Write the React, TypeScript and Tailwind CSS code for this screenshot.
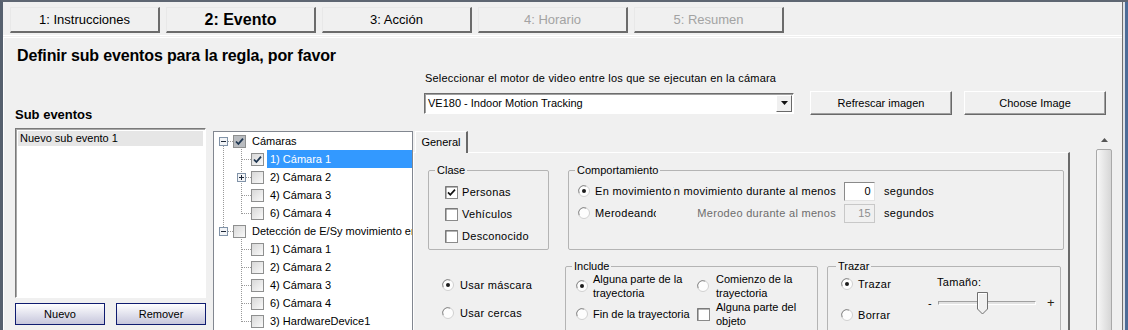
import React from "react";

function NavButton({ label, active, disabled }: { label: string; active?: boolean; disabled?: boolean }) {
  return (
    <div
      className={`flex h-[26px] w-[150px] items-center justify-center border-t border-l border-r-2 border-b-2 border-t-[#e8e8e8] border-l-[#e8e8e8] border-r-[#6b6b6b] border-b-[#6b6b6b] bg-[#f0f0f0] ${
        active ? "text-[16px] font-bold text-black" : disabled ? "text-[13px] text-[#a3a3a3]" : "text-[13px] text-black"
      }`}
    >
      {label}
    </div>
  );
}

function Radio({ on }: { on?: boolean }) {
  return (
    <svg width="12" height="12" viewBox="0 0 12 12" className="shrink-0">
      <circle cx="6" cy="6" r="5.5" fill="#fdfdfd" stroke="#d0d0d0" />
      <path d="M1.2 8.2 A5.2 5.2 0 0 1 8.2 1.2" stroke="#8c8c8c" fill="none" />
      {on && <circle cx="6" cy="6" r="2" fill="#1c1c1c" />}
    </svg>
  );
}

function Check({ on }: { on?: boolean }) {
  return (
    <svg width="13" height="13" viewBox="0 0 13 13" className="shrink-0">
      <rect x="0.5" y="0.5" width="12" height="12" fill="#fff" stroke="#8a8a8a" />
      <path d="M1 12 V1 H12" stroke="#6a6a6a" fill="none" />
      {on && <path d="M3 6.4 L5.3 8.8 L10 3.6" stroke="#111" strokeWidth="1.7" fill="none" />}
    </svg>
  );
}

function TreeCheck({ on, gray }: { on?: boolean; gray?: boolean }) {
  return (
    <svg width="13" height="13" viewBox="0 0 13 13" className="shrink-0">
      <defs>
        <linearGradient id="tcg" x1="0" y1="0" x2="1" y2="1">
          <stop offset="0" stopColor="#d6d6d6" />
          <stop offset="1" stopColor="#fbfbfb" />
        </linearGradient>
      </defs>
      <rect x="0.5" y="0.5" width="12" height="12" fill={gray ? "#b9bcc0" : "url(#tcg)"} stroke="#8e8f8f" />
      {on && <path d="M3 6.5 L5.4 9 L10 3.6" stroke="#1d3550" strokeWidth="1.8" fill="none" />}
    </svg>
  );
}

function TreeRow({ level, label, checked, gray, selected }: { level: 0 | 1; label: string; checked?: boolean; gray?: boolean; selected?: boolean }) {
  return (
    <div className={`flex h-[18px] items-center ${level === 0 ? "pl-[19px]" : "pl-[37px]"}`}>
      <TreeCheck on={checked} gray={gray} />
      <span
        className={`ml-[3px] flex h-full flex-1 items-center whitespace-nowrap pl-[3px] text-[11px] ${
          selected ? "bg-[#3399ff] text-white" : "text-black"
        }`}
      >
        {label}
      </span>
    </div>
  );
}

function TreeLines() {
  const dot = { stroke: "#9a9a9a", strokeDasharray: "1 1", fill: "none" } as const;
  return (
    <svg className="pointer-events-none absolute left-0 top-0" width="200" height="200">
      <line x1="9.5" y1="14" x2="9.5" y2="95" {...dot} />
      <line x1="14" y1="9.5" x2="19" y2="9.5" {...dot} />
      <line x1="14" y1="99.5" x2="19" y2="99.5" {...dot} />
      <line x1="27.5" y1="17" x2="27.5" y2="82" {...dot} />
      {[27.5, 63.5, 81.5].map((y) => (
        <line key={y} x1="28" y1={y} x2="37" y2={y} {...dot} />
      ))}
      <line x1="32" y1="45.5" x2="37" y2="45.5" {...dot} />
      <line x1="27.5" y1="107" x2="27.5" y2="190" {...dot} />
      {[117.5, 135.5, 153.5, 171.5, 189.5].map((y) => (
        <line key={y} x1="28" y1={y} x2="37" y2={y} {...dot} />
      ))}
      <g stroke="#8193a8" fill="#f2f4f7">
        <rect x="5.5" y="5.5" width="8" height="8" />
        <rect x="5.5" y="95.5" width="8" height="8" />
        <rect x="23.5" y="41.5" width="8" height="8" />
      </g>
      <g stroke="#1f2a3a">
        <line x1="7" y1="9.5" x2="12" y2="9.5" />
        <line x1="7" y1="99.5" x2="12" y2="99.5" />
        <line x1="25" y1="45.5" x2="30" y2="45.5" />
        <line x1="27.5" y1="43" x2="27.5" y2="48" />
      </g>
    </svg>
  );
}

function Group({ title, className, legendClass, children }: { title: string; className: string; legendClass?: string; children: React.ReactNode }) {
  return (
    <fieldset className={`rounded-[2px] border border-[#b4b4b4] ${className}`}>
      <legend className={`${legendClass ?? "ml-[6px]"} px-[2px] text-[11px] leading-[12px]`}>{title}</legend>
      {children}
    </fieldset>
  );
}

export default function App() {
  return (
    <div className="flex h-[330px] w-[1128px] overflow-hidden border-t-2 border-l-[3px] border-t-[#5e6672] border-l-[#56606e] bg-[#f0f0f0] font-['Liberation_Sans',Arial,sans-serif] text-black">
      <div className="flex min-w-0 flex-1 flex-col border-r border-r-[#6f6f6f]">
        {/* wizard steps */}
        <div className="flex h-[34px] shrink-0 gap-[6px] border-b border-b-white pt-[5px] pl-[7px]">
          <NavButton label="1: Instrucciones" />
          <NavButton label="2: Evento" active />
          <NavButton label="3: Acción" />
          <NavButton label="4: Horario" disabled />
          <NavButton label="5: Resumen" disabled />
        </div>

        {/* content */}
        <div className="mt-[1px] flex flex-1 flex-col border-t border-l border-white pl-[11px]">
          <h1 className="mt-[9px] ml-[2px] text-[16px] font-bold leading-[18px] tracking-[-0.15px]">Definir sub eventos para la regla, por favor</h1>

          <div className="flex gap-[7px]">
            {/* sub events */}
            <div className="flex w-[191px] flex-col">
              <div className="mt-[42px] text-[13px] font-bold leading-[16px]">Sub eventos</div>
              <div className="mt-[5px] h-[170px] border border-t-[#7a7a7a] border-l-[#7a7a7a] border-b-white border-r-white bg-white p-[2px] shadow-[inset_1px_1px_0_#a8a8a8]">
                <div className="h-[15px] bg-[#e6e6e6] pl-[2px] text-[11px] leading-[15px]">Nuevo sub evento 1</div>
              </div>
              <div className="mt-[5px] flex justify-between">
                <button className="h-[22px] w-[90px] border border-[#0f1c70] bg-linear-to-b from-white to-[#c6c6dc] text-[11px]">Nuevo</button>
                <button className="h-[22px] w-[90px] border border-[#0f1c70] bg-linear-to-b from-white to-[#c6c6dc] text-[11px]">Remover</button>
              </div>
            </div>

            <div className="flex w-[900px] flex-col">
              <div className="mt-[7px] ml-[211px] pl-[1px] text-[11px] leading-[13px] tracking-[0.2px]">
                Seleccionar el motor de video entre los que se ejecutan en la cámara
              </div>
              <div className="mt-[6px] ml-[211px] flex h-[24px] items-center">
                <div className="flex h-[21px] w-[370px] items-center border border-t-[#6d6d6d] border-l-[#6d6d6d] border-b-white border-r-white bg-white shadow-[inset_1px_1px_0_#a0a0a0]">
                  <span className="flex-1 pl-[3px] text-[11px]">VE180 - Indoor Motion Tracking</span>
                  <div className="mr-[1px] flex h-[17px] w-[16px] items-center justify-center border border-t-white border-l-white border-r-[#696969] border-b-[#696969] bg-[#f0f0f0]">
                    <svg width="7" height="4" viewBox="0 0 7 4">
                      <path d="M0 0 H7 L3.5 4 Z" fill="#111" />
                    </svg>
                  </div>
                </div>
                <button className="ml-[16px] h-[24px] w-[142px] border border-t-white border-l-white border-r-[#696969] border-b-[#696969] bg-[#f0f0f0] text-[11px] shadow-[inset_-1px_-1px_0_#a0a0a0]">
                  Refrescar imagen
                </button>
                <button className="ml-[12px] h-[24px] w-[142px] border border-t-white border-l-white border-r-[#696969] border-b-[#696969] bg-[#f0f0f0] text-[11px] shadow-[inset_-1px_-1px_0_#a0a0a0]">
                  Choose Image
                </button>
              </div>

              <div className="mt-[16px] flex h-[210px]">
                {/* tree */}
                <div className="relative h-full w-[200px] overflow-hidden border border-[#828790] bg-white">
                  <TreeLines />
                  <div className="relative">
                    <TreeRow level={0} label="Cámaras" checked gray />
                    <TreeRow level={1} label="1) Cámara 1" checked selected />
                    <TreeRow level={1} label="2) Cámara 2" />
                    <TreeRow level={1} label="4) Cámara 3" />
                    <TreeRow level={1} label="6) Cámara 4" />
                    <TreeRow level={0} label="Detección de E/Sy movimiento en cámara" />
                    <TreeRow level={1} label="1) Cámara 1" />
                    <TreeRow level={1} label="2) Cámara 2" />
                    <TreeRow level={1} label="4) Cámara 3" />
                    <TreeRow level={1} label="6) Cámara 4" />
                    <TreeRow level={1} label="3) HardwareDevice1" />
                  </div>
                </div>

                {/* tabs */}
                <div className="flex flex-1">
                  <div className="flex w-[657px] flex-col">
                    <div className="flex h-[21px]">
                      <div className="relative z-10 ml-[2px] flex h-[22px] w-[53px] items-center justify-center border-t border-l border-r-2 border-t-white border-l-white border-r-[#696969] bg-[#f0f0f0] text-[11px]">
                        General
                      </div>
                    </div>
                    <div className="flex-1 overflow-hidden border-t border-l border-r-2 border-t-white border-l-white border-r-[#6a6a6a] pt-[11px]">
                      <div className="ml-[14px] flex h-[86px] gap-[19px]">
                        <Group title="Clase" className="h-[86px] w-[121px]">
                          <div className="flex flex-col pt-[5px] pl-[16px] text-[11px] tracking-[0.3px]">
                            <div className="flex h-[22px] items-center gap-[4px]">
                              <Check on />
                              <span>Personas</span>
                            </div>
                            <div className="flex h-[22px] items-center gap-[4px]">
                              <Check />
                              <span>Vehículos</span>
                            </div>
                            <div className="flex h-[22px] items-center gap-[4px]">
                              <Check />
                              <span>Desconocido</span>
                            </div>
                          </div>
                        </Group>
                        <Group title="Comportamiento" className="h-[86px] w-[496px]">
                          <div className="flex flex-col pt-[4px] pl-[9px] text-[11px] tracking-[0.3px]">
                            <div className="flex h-[22px] items-center">
                              <Radio on />
                              <span className="ml-[5px] w-[78px] shrink-0 overflow-hidden whitespace-nowrap">En movimiento</span>
                              <span className="flex w-[165px] shrink-0 justify-end overflow-hidden whitespace-nowrap pr-[2px]">
                                En movimiento durante al menos
                              </span>
                              <div className="ml-[6px] h-[19px] w-[31px] border border-t-[#8a8a8a] border-l-[#8a8a8a] border-b-[#e3e3e3] border-r-[#e3e3e3] bg-white pr-[3px] text-right leading-[17px]">
                                0
                              </div>
                              <span className="ml-[9px]">segundos</span>
                            </div>
                            <div className="flex h-[22px] items-center">
                              <Radio />
                              <span className="ml-[5px] w-[61px] shrink-0 overflow-hidden whitespace-nowrap">Merodeando</span>
                              <span className="flex w-[182px] shrink-0 justify-end overflow-hidden whitespace-nowrap pr-[2px] text-[#6d6d6d]">
                                Merodeo durante al menos
                              </span>
                              <div className="ml-[6px] h-[19px] w-[31px] border border-[#c8c8c8] bg-[#f0f0f0] pr-[3px] text-right leading-[17px] text-[#8d8d8d]">
                                15
                              </div>
                              <span className="ml-[9px]">segundos</span>
                            </div>
                          </div>
                        </Group>
                      </div>

                      <div className="mt-[10px] flex">
                        <div className="ml-[28px] flex w-[123px] flex-col gap-[10px] pt-[16px] text-[11px] tracking-[0.3px]">
                          <div className="flex h-[18px] items-center gap-[6px]">
                            <Radio on />
                            <span>Usar máscara</span>
                          </div>
                          <div className="flex h-[18px] items-center gap-[6px]">
                            <Radio />
                            <span>Usar cercas</span>
                          </div>
                        </div>

                        <Group title="Include" className="h-[80px] w-[253px]">
                          <div className="grid grid-cols-[121px_1fr] pl-[10px] text-[11px] leading-[14px]">
                            <div className="flex h-[28px] items-center gap-[5px]">
                              <Radio on />
                              <span>
                                Alguna parte de la
                                <br />
                                trayectoria
                              </span>
                            </div>
                            <div className="flex h-[28px] items-center gap-[7px]">
                              <Radio />
                              <span>
                                Comienzo de la
                                <br />
                                trayectoria
                              </span>
                            </div>
                            <div className="flex h-[28px] items-center gap-[5px]">
                              <Radio />
                              <span>Fin de la trayectoria</span>
                            </div>
                            <div className="flex h-[28px] items-center gap-[6px]">
                              <Check />
                              <span>
                                Alguna parte del
                                <br />
                                objeto
                              </span>
                            </div>
                          </div>
                        </Group>

                        <Group title="Trazar" className="ml-[9px] h-[80px] w-[234px]" legendClass="ml-[8px]">
                          <div className="flex text-[11px] tracking-[0.3px]">
                            <div className="flex w-[98px] flex-col gap-[13px] pt-[3px] pl-[13px]">
                              <div className="flex h-[18px] items-center gap-[5px]">
                                <Radio on />
                                <span>Trazar</span>
                              </div>
                              <div className="flex h-[18px] items-center gap-[5px]">
                                <Radio />
                                <span>Borrar</span>
                              </div>
                            </div>
                            <div className="flex flex-col pt-[3px]">
                              <div className="h-[14px] pl-[11px] leading-[14px]">Tamaño:</div>
                              <div className="mt-[3px] flex h-[22px] items-center">
                                <span className="w-[12px] pl-[2px]">-</span>
                                <div className="relative flex h-[22px] w-[98px] items-center">
                                  <div className="h-[4px] w-full border border-t-[#a0a0a0] border-l-[#a0a0a0] border-b-white border-r-white bg-[#e2e2e2]" />
                                  <svg className="absolute top-0 left-[39px]" width="11" height="23" viewBox="0 0 11 23">
                                    <path d="M0.5 0.5 H10.5 V17 L5.5 22 L0.5 17 Z" fill="#f0f0f0" stroke="#6f6f6f" />
                                    <path d="M1.5 16.5 V1.5 H9.5" stroke="#fff" fill="none" />
                                  </svg>
                                </div>
                                <span className="ml-[11px] text-[13px] text-[#2a2214]">+</span>
                              </div>
                            </div>
                          </div>
                        </Group>
                      </div>
                    </div>
                  </div>

                  {/* scrollbar */}
                  <div className="ml-[26px] flex h-full w-[16px] flex-col">
                    <div className="flex h-[18px] items-center justify-center">
                      <svg width="7" height="4" viewBox="0 0 7 4">
                        <path d="M3.5 0 L7 4 H0 Z" fill="#555" />
                      </svg>
                    </div>
                    <div className="flex-1 rounded-[2px] border border-[#a9a9a9] bg-linear-to-r from-[#f7f7f7] to-[#d6d6d6]" />
                  </div>
                </div>
              </div>
            </div>
          </div>
        </div>
      </div>
      <div className="flex w-[5px]">
        <div className="w-[2px] bg-[#dde2e8]" />
        <div className="flex-1 bg-[#4d6c97]" />
      </div>
    </div>
  );
}
